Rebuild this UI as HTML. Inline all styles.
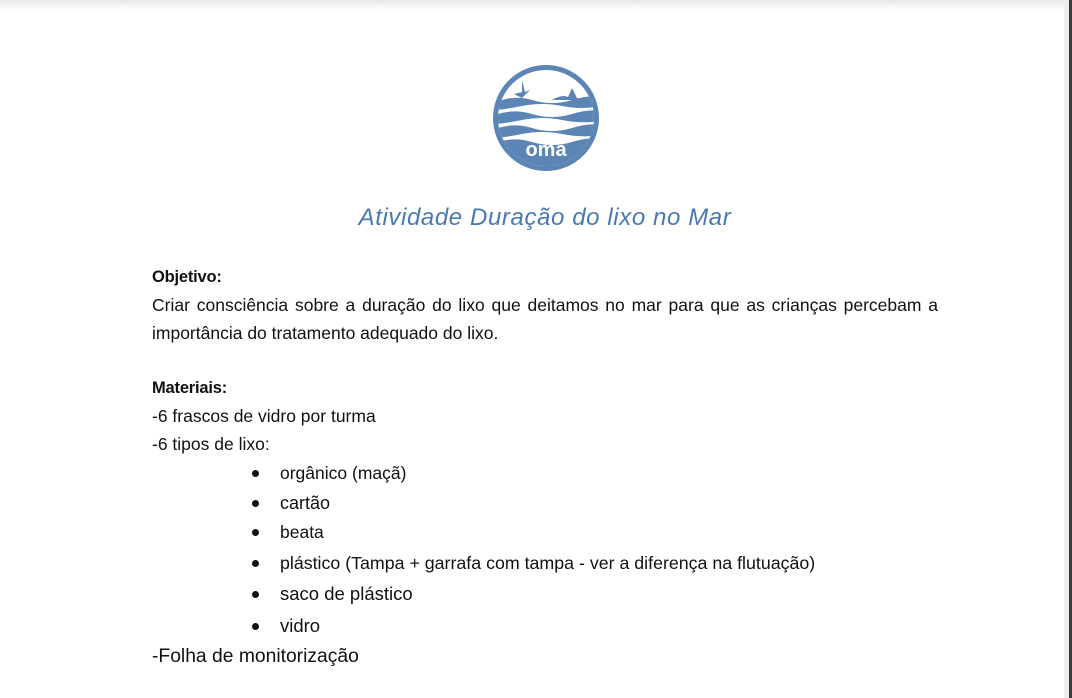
<!DOCTYPE html>
<html><head><meta charset="utf-8"><style>
body{margin:0;width:1072px;height:698px;background:#fff;position:relative;overflow:hidden;font-family:"Liberation Sans",sans-serif;color:#111}
.top{position:absolute;left:0;top:0;width:1064px;height:10px;background:linear-gradient(#e6e6e6,#fff)}
.rg{position:absolute;left:1064px;top:0;width:6px;height:698px;background:#ededed}
.rd{position:absolute;left:1069px;top:0;width:3px;height:698px;background:#3a3a3a}
.t{position:absolute;left:152px;font-size:17.5px;white-space:nowrap;line-height:20px}
.b{font-weight:bold;font-size:16.5px;letter-spacing:-0.2px}
.li{left:280px}
.dot{position:absolute;left:252px;width:7px;height:7px;border-radius:50%;background:#111}
h1{position:absolute;left:0;width:1090px;text-align:center;top:204px;margin:0;font-size:24px;font-weight:normal;font-style:italic;color:#4a78b0;letter-spacing:0.6px}
</style></head><body>
<div class="top"></div><div class="rg"></div><div class="rd"></div>
<svg style="position:absolute;left:492px;top:64px" width="108" height="108" viewBox="0 0 108 108">
<circle cx="54" cy="54" r="53" fill="#5b85b5"/>
<circle cx="54" cy="54" r="48" fill="#fff"/>
<clipPath id="c"><circle cx="54" cy="54" r="48"/></clipPath>
<g clip-path="url(#c)" fill="#5b85b5">
<path d="M0 40 Q20 30 40 36 T80 36 T110 34 L110 42 Q90 46 70 42 T30 42 T0 46Z"/>
<path d="M0 52 Q20 44 40 50 T80 50 T110 48 L110 57 Q90 60 70 56 T30 56 T0 60Z"/>
<path d="M0 66 Q20 58 40 64 T80 64 T110 62 L110 71 Q90 74 70 70 T30 70 T0 74Z"/>
<path d="M0 80 Q20 72 40 78 T80 78 T110 76 L110 110 L0 110Z"/>
</g>
<path d="M60 36 Q70 30 76 33 L80 24 L86 36Z" fill="#5b85b5"/>
<path d="M22 30 L30 28 L30 16 L33 28 L38 26 L30 34Z" fill="#5b85b5"/>
<text x="54" y="92" text-anchor="middle" font-family="Liberation Sans" font-weight="bold" font-size="20" fill="#fff">oma</text>
</svg>
<h1>Atividade Duração do lixo no Mar</h1>
<div class="t b" style="top:267px">Objetivo:</div>
<div class="t" style="top:295px;width:786px;text-align:justify;text-align-last:justify">Criar consciência sobre a duração do lixo que deitamos no mar para que as crianças percebam a</div>
<div class="t" style="top:323px">importância do tratamento adequado do lixo.</div>
<div class="t b" style="top:378px">Materiais:</div>
<div class="t" style="top:406px">-6 frascos de vidro por turma</div>
<div class="t" style="top:434px">-6 tipos de lixo:</div>
<div class="dot" style="top:470px"></div><div class="t li" style="top:463px">orgânico (maçã)</div>
<div class="dot" style="top:500px"></div><div class="t li" style="top:493px;font-size:18px">cartão</div>
<div class="dot" style="top:529px"></div><div class="t li" style="top:522px">beata</div>
<div class="dot" style="top:560px"></div><div class="t li" style="top:553px;font-size:17.8px">plástico (Tampa + garrafa com tampa - ver a diferença na flutuação)</div>
<div class="dot" style="top:591px"></div><div class="t li" style="top:584px;font-size:18.5px">saco de plástico</div>
<div class="dot" style="top:623px"></div><div class="t li" style="top:616px;font-size:18.5px">vidro</div>
<div class="t" style="top:647px;font-size:19.3px">-Folha de monitorização</div>
</body></html>
